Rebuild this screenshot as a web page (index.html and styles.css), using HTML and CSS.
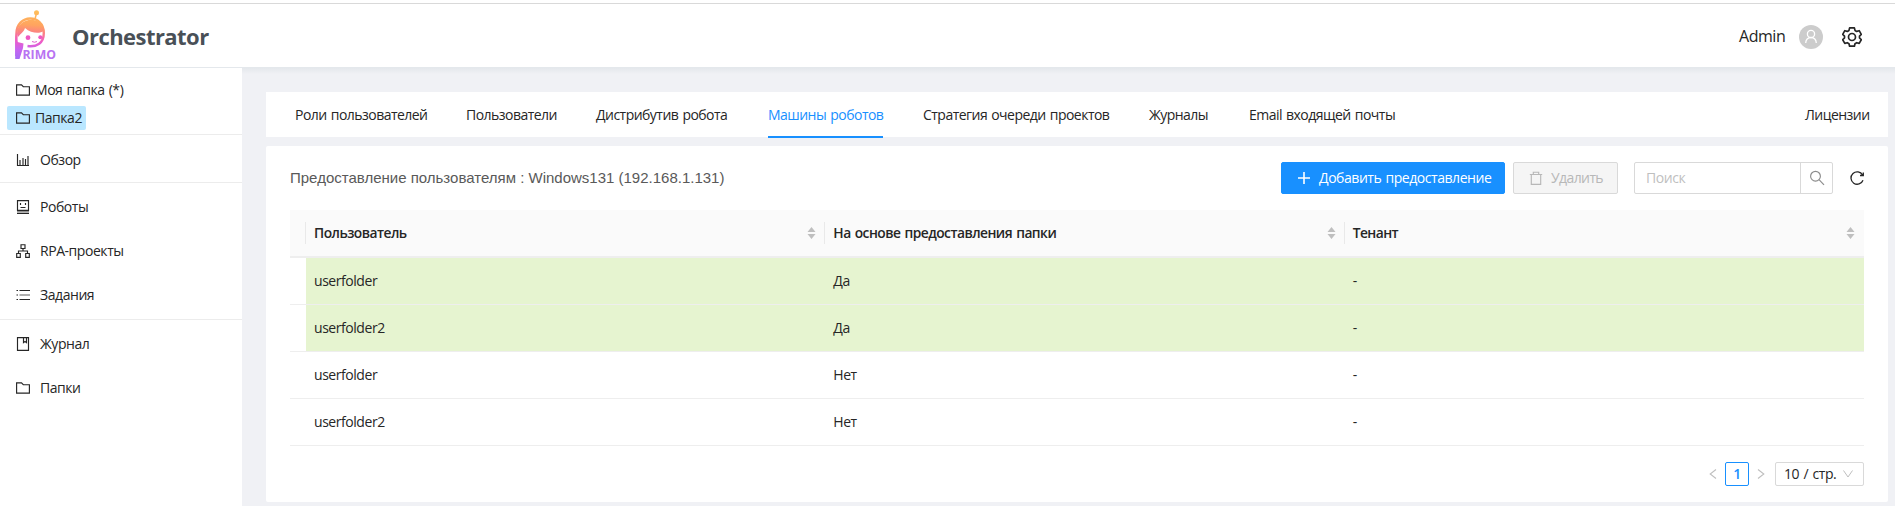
FILE: index.html
```html
<!DOCTYPE html>
<html lang="ru">
<head>
<meta charset="utf-8">
<title>Orchestrator</title>
<link rel="stylesheet" href="styles.css">
</head>
<body>
<svg class="defs" width="0" height="0">
  <symbol id="folder" viewBox="0 0 14 14"><path d="M.6 1.9h4.9l1.8 1.8h6.1v8.4H.6z"/></symbol>
  <symbol id="sort" viewBox="0 0 9 14"><path d="M4.5 1 8.5 6h-8zM4.5 13 8.5 8h-8z"/></symbol>
</svg>
<header class="header">
  <svg class="logo" width="42" height="50" viewBox="0 0 42 50">
    <defs><linearGradient id="lg" gradientUnits="userSpaceOnUse" x1="18" y1="0" x2="15" y2="50">
      <stop offset="0" stop-color="#ffc05a"/><stop offset=".3" stop-color="#ffa45f"/><stop offset=".46" stop-color="#fb7f86"/><stop offset=".62" stop-color="#ee5cc6"/><stop offset=".8" stop-color="#c765f0"/><stop offset="1" stop-color="#a36cf5"/></linearGradient></defs>
    <circle cx="21.500" cy="2.700" r="2.500" fill="url(#lg)"/>
    <path d="M21.300 4 20 9" fill="none" stroke="url(#lg)" stroke-width="1.500"/>
    <path d="M1.400 46V24C1.400 3.500 28.800 3.500 28.800 23C28.800 33 22 37.300 12.500 36" fill="none" stroke="url(#lg)" stroke-width="2.400"/>
    <path d="M.2 49V24L2.500 32 8.500 33.500 8 38 4.500 49z" fill="url(#lg)"/>
    <path d="M2 24C2 6 28 5 28.500 21 25 24 16 23.500 10 18 9 22 6 23 3 27z" fill="url(#lg)"/>
    <circle cx="13" cy="27.700" r="2.400" fill="#ee57c4"/><circle cx="25.300" cy="27.200" r="2" fill="#ee57c4"/>
    <path d="M17 31.500q2.500 1.500 5 0" fill="none" stroke="#e25fd0" stroke-width="1"/>
    <text class="logo-text" x="7.500" y="49" textLength="33.500" lengthAdjust="spacingAndGlyphs">RIMO</text>
  </svg>
  <h1 class="brand">Orchestrator</h1>
  <div class="account">
    <span class="user">Admin</span>
    <svg class="avatar" width="24" height="24" viewBox="0 0 24 24"><circle cx="12" cy="12" r="12" fill="#ccc"/><circle cx="12" cy="8.900" r="3.600"/><path d="M6.700 18c.2-3.300 2.400-5.300 5.300-5.300s5.100 2 5.300 5.300"/></svg>
    <svg class="gear" width="20" height="20" viewBox="0 0 20 20"><path d="M7.600.9h4.800l.6 2.500 1.700 1 2.500-.7 2.100 3.700-1.800 1.700v1.900l1.800 1.700-2.100 3.700-2.500-.7-1.700 1-.6 2.500H7.600L7 16.700l-1.700-1-2.500.7L.7 12.700 2.500 11V9.100L.7 7.400l2.100-3.700 2.500.7 1.700-1z"/><circle cx="10" cy="10" r="3.500"/></svg>
  </div>
</header>
<div class="layout">
  <aside class="sidebar">
    <div class="tree">
      <div class="node"><svg class="ic"><use href="#folder"/></svg><span>Моя папка (*)</span></div>
      <div class="node active"><svg class="ic"><use href="#folder"/></svg><span>Папка2</span></div>
    </div>
    <nav class="group one">
      <a class="item"><svg class="ic"><path d="M1.500 1v11.500H13M4 7v5M7 5v7M9.500 6v6M12 3v9"/></svg><span>Обзор</span></a>
    </nav>
    <nav class="group three">
      <a class="item"><svg class="ic"><path d="M1.500.6h11v9.800h-11zM4.500 3v2M9.500 3v2M4.500 7.500h5M1 13.400h12"/><path class="soft" d="M1 11.500h12"/></svg><span>Роботы</span></a>
      <a class="item"><svg class="ic"><path d="M5 .7h4v3.800H5zM.7 9.500h3.600v3.800H.7zM9.700 9.500h3.600v3.800H9.700zM7 4.500V7M2.500 9.500V7h9v2.500"/></svg><span>RPA-проекты</span></a>
      <a class="item"><svg class="ic"><path d="M3.500 2.500H14M3.500 11.500H14M.5 2.500h1.500M.5 7h1.500M.5 11.500h1.500"/><path class="soft" d="M3.500 7H14"/></svg><span>Задания</span></a>
    </nav>
    <nav class="group two">
      <a class="item"><svg class="ic"><path d="M1.500.6h11v12.800h-11zM7.500.6v5l1.500-1.100 1.500 1.100v-5"/></svg><span>Журнал</span></a>
      <a class="item"><svg class="ic"><use href="#folder"/></svg><span>Папки</span></a>
    </nav>
  </aside>
  <main class="main">
    <nav class="tabs">
      <a class="tab w1">Роли пользователей</a>
      <a class="tab w2">Пользователи</a>
      <a class="tab w3">Дистрибутив робота</a>
      <a class="tab w4 current">Машины роботов</a>
      <a class="tab w5">Стратегия очереди проектов</a>
      <a class="tab w6">Журналы</a>
      <a class="tab w7">Email входящей почты</a>
      <a class="tab last">Лицензии</a>
    </nav>
    <section class="card">
      <div class="toolbar">
        <h2 class="title">Предоставление пользователям : Windows131 (192.168.1.131)</h2>
        <button class="btn primary"><svg class="ic"><path d="M7 1v12M1 7h12"/></svg><span>Добавить предоставление</span></button>
        <button class="btn disabled"><svg class="ic"><path d="M.8 3.500h12.400M4.300 3.500V1.200h5.400v2.300M2.300 3.500v9.800h9.400V3.500"/></svg><span>Удалить</span></button>
        <div class="search"><span class="placeholder">Поиск</span><span class="go"><svg class="ic big"><circle cx="5.500" cy="5.200" r="4.900"/><path d="M9 8.700 14 13.800"/></svg></span></div>
        <svg class="ic refresh"><path d="M12.600 4A6.200 6.200 0 1 0 13 9.200M13.300 1.500V4.500H10"/></svg>
      </div>
      <div class="table">
        <div class="row head"><span class="cell pad"></span><span class="cell">Пользователь<svg class="sort"><use href="#sort"/></svg></span><span class="cell">На основе предоставления папки<svg class="sort"><use href="#sort"/></svg></span><span class="cell">Тенант<svg class="sort"><use href="#sort"/></svg></span></div>
        <div class="row green"><span class="cell pad"></span><span class="cell">userfolder</span><span class="cell">Да</span><span class="cell">-</span></div>
        <div class="row green"><span class="cell pad"></span><span class="cell">userfolder2</span><span class="cell">Да</span><span class="cell">-</span></div>
        <div class="row"><span class="cell pad"></span><span class="cell">userfolder</span><span class="cell">Нет</span><span class="cell">-</span></div>
        <div class="row"><span class="cell pad"></span><span class="cell">userfolder2</span><span class="cell">Нет</span><span class="cell">-</span></div>
      </div>
      <div class="pager">
        <svg class="arrow" viewBox="0 0 8 12"><path d="M7 1.500 1.200 6 7 10.500"/></svg>
        <span class="page">1</span>
        <svg class="arrow" viewBox="0 0 8 12"><path d="M1 1.500 6.800 6 1 10.500"/></svg>
        <span class="size"><span>10 / стр.</span><svg class="down" viewBox="0 0 10 10"><path d="M.5 1.500 5 8 9.500 1.500"/></svg></span>
      </div>
    </section>
  </main>
</div>
</body>
</html>
```
FILE: styles.css
```css
* { box-sizing: border-box; }
body { margin: 0; padding-top: 3px; height: 506px; overflow: hidden; background: #fff; color: #262626; font: 14px/22px "Open Sans", "Noto Sans", sans-serif; letter-spacing: -0.45px; word-spacing: 1px; }
svg { flex: none; }
.defs { position: absolute; }
.header { display: flex; align-items: center; height: 65px; padding: 0 33px 0 15px; border-top: 1px solid #d9d9d9; border-bottom: 1px solid #e4e8ec; background: #fff; }
.logo { margin-top: -1px; overflow: visible; }
.logo-text { font: bold 12.500px "Open Sans", sans-serif; fill: #b873f2; letter-spacing: 0; }
.brand { margin: 0 0 0 15px; font-size: 22px; line-height: 30px; font-weight: 700; color: #495057; letter-spacing: -0.55px; }
.account { margin-left: auto; display: flex; align-items: center; }
.user { font-size: 16px; line-height: 24px; width: 60px; }
.avatar { fill: none; stroke: #fff; stroke-width: 1.3; margin: 3px 19px 0 0; }
.avatar circle:first-child { stroke: none; }
.gear { fill: none; stroke: #262626; stroke-width: 1.7; stroke-linejoin: round; margin-top: 2px; }
.layout { display: flex; height: 438px; }
.sidebar { width: 242px; flex: none; background: #fff; }
.tree { height: 67px; padding: 10px 7px 0; border-bottom: 1px solid #ececec; display: flex; flex-direction: column; align-items: flex-start; gap: 4px; }
.node { display: flex; align-items: center; height: 24px; padding: 0 4px 0 9px; gap: 5px; border-radius: 2px; }
.active { background: #bae7ff; width: 79px; }
.ic { width: 14px; height: 14px; overflow: visible; fill: none; stroke: currentColor; stroke-width: 1.15; }
.soft { opacity: .5; stroke-width: 1.5; }
.group { border-bottom: 1px solid #ececec; display: flex; flex-direction: column; }
.one { height: 48px; padding-top: 3px; }
.three { height: 137px; padding-top: 2px; }
.two { border: 0; padding-top: 2px; }
.item { display: flex; align-items: center; height: 44px; padding-left: 16px; gap: 10px; }
.main { flex: 1; background: #f0f1f5 linear-gradient(#e4e8ec, #f0f1f5) top / 100% 6px no-repeat; padding: 24px 7px 4px 24px; display: flex; flex-direction: column; gap: 9px; }
.tabs { height: 45px; flex: none; background: #fff; display: flex; padding: 0 20px 0 29px; line-height: 46px; white-space: nowrap; letter-spacing: -0.53px; }
.tab { height: 46px; margin-right: 40px; }
.current { color: #1890ff; border-bottom: 2px solid #1890ff; }
.w1 { width: 131px; }
.w2 { width: 90px; }
.w3 { width: 132px; }
.w4 { width: 115px; }
.w5 { width: 186px; }
.w6 { width: 60px; }
.w7 { width: 145px; }
.last { margin: 0 0 0 auto; width: 63px; }
.card { flex: 1; background: #fff; border-radius: 2px; padding: 16px 24px 0; }
.toolbar { display: flex; align-items: center; height: 32px; }
.title { margin: 0 auto 0 0; font: 15px/24px "Liberation Sans", Arial, sans-serif; letter-spacing: 0; word-spacing: 0; color: #595959; }
.btn { height: 32px; border: 1px solid #1890ff; border-radius: 2px; font: inherit; letter-spacing: inherit; word-spacing: inherit; display: flex; align-items: center; gap: 8px; padding: 0 15px; white-space: nowrap; }
.primary { background: #1890ff; color: #fff; width: 224px; margin-right: 8px; }
.primary .ic { stroke-width: 1.6; }
.disabled { background: #f5f5f5; border-color: #d9d9d9; color: #b8b8b8; width: 105px; margin-right: 16px; letter-spacing: -0.6px; }
.search { width: 199px; height: 32px; border: 1px solid #d9d9d9; border-radius: 2px; display: flex; align-items: center; padding-left: 11px; color: #bfbfbf; margin-right: 17px; }
.go { margin-left: auto; width: 32px; height: 30px; border-left: 1px solid #d9d9d9; display: flex; align-items: center; justify-content: center; color: #8c8c8c; }
.refresh { stroke-width: 1.3; }
.table { margin-top: 16px; }
.row { display: grid; grid-template-columns: 16px 1fr 1fr 1fr; height: 47px; border-bottom: 1px solid #eee; }
.cell { display: flex; align-items: center; padding: 0 8px; }
.pad { padding: 0; }
.green .cell:not(.pad) { background: #e6f4d0; }
.head { height: 48px; background: #fafafa; border-bottom: 2px solid #eee; font-weight: 600; font-size: 13.800px; letter-spacing: -0.53px; }
.head .cell:not(:last-child) { background: linear-gradient(#e9e9e9, #e9e9e9) right center / 1px 22px no-repeat; }
.sort { width: 9px; height: 14px; margin-left: auto; margin-right: 1px; fill: #bfbfbf; }
.pager { display: flex; align-items: center; height: 24px; margin-top: 16px; justify-content: flex-end; }
.arrow { width: 8px; height: 12px; fill: none; stroke: #bfbfbf; stroke-width: 1.1; margin: 0 8px; }
.page { width: 24px; height: 24px; border: 1px solid #1890ff; border-radius: 2px; color: #1890ff; text-align: center; font-weight: 600; }
.size { width: 89px; height: 24px; margin-left: 2px; border: 1px solid #d9d9d9; border-radius: 2px; display: flex; align-items: center; justify-content: space-between; padding: 0 10px 0 8px; letter-spacing: -0.4px; }
.down { width: 10px; height: 10px; fill: none; stroke: #bfbfbf; }
```
